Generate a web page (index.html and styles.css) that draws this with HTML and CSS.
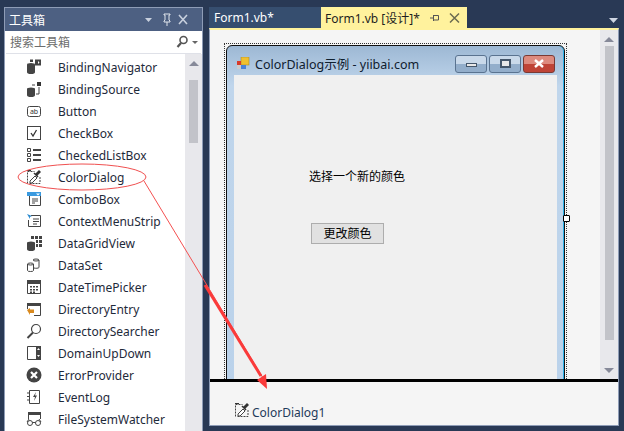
FILE: index.html
```html
<!DOCTYPE html>
<html lang="zh">
<head>
<meta charset="utf-8">
<title>ColorDialog</title>
<link rel="stylesheet" href="styles.css">
</head>
<body>
<div class="ide">
  <aside class="toolbox">
    <header class="tb-title">
      <span class="tb-name">工具箱</span>
      <svg class="tb-ctl" width="52" height="14" viewBox="0 0 52 14"><path d="M0 5h7l-3.500 4z" fill="#c8d0de"/><path d="M19 1h6v1h-1v5l1 1v1h-6V8l1-1V2h-1zM22 9v4" fill="none" stroke="#dfe4ec"/><path d="M34 2l8 9M42 2l-8 9" stroke="#c8d0de" stroke-width="1.600"/></svg>
    </header>
    <div class="tb-search">
      <span class="tb-hint">搜索工具箱</span>
      <svg width="24" height="14" viewBox="0 0 24 14"><circle cx="7.500" cy="5" r="3.500" fill="none" stroke="#555" stroke-width="1.600"/><path d="M5 8L1.500 12" stroke="#555" stroke-width="2.200"/><path d="M16 6h6l-3 3z" fill="#666"/></svg>
    </div>
    <div class="tb-body">
      <ul class="tb-list">
        <li class="tb-item"><svg class="ico" viewBox="0 0 16 16"><path d="M1 5.500a4 1.500 0 0 1 8 0V13a4 2 0 0 1-8 0z" fill="#444"/><path d="M4 3V.500h3V3M9 .500h6v6H9z" fill="#444"/><path d="M12 2v3l1.500-1.500z" fill="#fff"/></svg><span>BindingNavigator</span></li>
        <li class="tb-item"><svg class="ico" viewBox="0 0 16 16"><path d="M1 8a4 1.500 0 0 1 8 0v6a4 2 0 0 1-8 0z" fill="#444"/><path d="M11 1h4v4h-4z" fill="#333"/><path d="M13 6v7h-3M6 4h3" fill="none" stroke="#444"/></svg><span>BindingSource</span></li>
        <li class="tb-item"><svg class="ico" viewBox="0 0 16 16"><rect x="1.500" y="3.500" width="13" height="10" rx="2" fill="none" stroke="#444"/><text class="ico-t" x="8" y="11">ab</text></svg><span>Button</span></li>
        <li class="tb-item"><svg class="ico" viewBox="0 0 16 16"><rect x="1.500" y="1.500" width="13" height="13" fill="none" stroke="#444"/><path d="M5 8l2 3 3.500-6" fill="none" stroke="#333" stroke-width="1.300"/></svg><span>CheckBox</span></li>
        <li class="tb-item"><svg class="ico" viewBox="0 0 16 16"><path d="M1.500 1.500h3v3h-3zM1.500 6.500h3v3h-3zM1.500 11.500h3v3h-3z" fill="none" stroke="#444"/><path d="M7 3h8M7 8h8M7 13h8" stroke="#444" stroke-width="2"/></svg><span>CheckedListBox</span></li>
        <li class="tb-item"><svg class="ico" viewBox="0 0 16 16"><path d="M1.500 14.500v-12h7M14 8v6.500H3" fill="none" stroke="#444" stroke-dasharray="2 1"/><path d="M1 1h4v1H1z" fill="#333"/><path d="M4 12l5-5 2 2-5 5H4z" fill="#fff" stroke="#444"/><path d="M9 5l4-4 2 2-4 4z" fill="#333"/><path d="M8 4l4 4" stroke="#333" stroke-width="1.500"/></svg><span>ColorDialog</span></li>
        <li class="tb-item"><svg class="ico" viewBox="0 0 16 16"><path d="M1 1h14v4H1z" fill="#3a9ae0"/><path d="M10 2.500h4l-2 2z" fill="#fff"/><path d="M3.500 5v9.500h11V5" fill="none" stroke="#444"/><path d="M6 8h6M6 10h6M6 12h3" stroke="#444"/></svg><span>ComboBox</span></li>
        <li class="tb-item"><svg class="ico" viewBox="0 0 16 16"><path d="M5 2.500h9.500v11h-12V7" fill="none" stroke="#444"/><path d="M7 6h6M7 8.500h6M7 11h4" stroke="#444"/><path d="M1 1l5 2-2 1 0 2z" fill="#2a8ad0"/></svg><span>ContextMenuStrip</span></li>
        <li class="tb-item"><svg class="ico" viewBox="0 0 16 16"><path d="M1 8a4 1.500 0 0 1 8 0v6a4 2 0 0 1-8 0z" fill="#444"/><path d="M5 1h3v3H5zM9 1h3v3H9zM13 1h3v3h-3zM10 5h2v3h-2zM13 5h3v3h-3zM10 9h2v3h-2zM13 9h3v3h-3z" fill="#444"/></svg><span>DataGridView</span></li>
        <li class="tb-item"><svg class="ico" viewBox="0 0 16 16"><path d="M1.500 7a3 1 0 0 1 6 0v6.500a3 1 0 0 1-6 0zM1.500 7a3 1 0 0 0 6 0" fill="#fff" stroke="#444"/><path d="M7 3a3 1 0 0 1 6 0v7.500a3 1 0 0 1-5 .5" fill="none" stroke="#444"/><path d="M7 3a3 1 0 0 0 6 0" fill="none" stroke="#444"/></svg><span>DataSet</span></li>
        <li class="tb-item"><svg class="ico" viewBox="0 0 16 16"><path d="M1 1h14v4H1z" fill="#444"/><path d="M1.500 1.500h13v13h-13z" fill="none" stroke="#444"/><path d="M4 7h2v1.500H4zM7 7h2v1.500H7zM10 7h2v1.500h-2zM4 10h2v1.500H4zM7 10h2v1.500H7zM10 10h2v1.500h-2zM4 12.500h2V14H4zM7 12.500h2V14H7z" fill="#444"/></svg><span>DateTimePicker</span></li>
        <li class="tb-item"><svg class="ico" viewBox="0 0 16 16"><path d="M1 2h14v3H1z" fill="#444"/><path d="M14.500 5v9.500H8M1.500 5v3" fill="none" stroke="#444"/><path d="M1 9l3-2v1.500h4V12H4v2z" fill="#d98a1f"/></svg><span>DirectoryEntry</span></li>
        <li class="tb-item"><svg class="ico" viewBox="0 0 16 16"><circle cx="10" cy="6" r="4.500" fill="none" stroke="#444" stroke-width="1.200"/><path d="M7 9.500L1.500 15" stroke="#444" stroke-width="2"/></svg><span>DirectorySearcher</span></li>
        <li class="tb-item"><svg class="ico" viewBox="0 0 16 16"><path d="M1.500 1.500h13v13h-13z" fill="none" stroke="#444"/><path d="M10 1h5v14h-5z" fill="#444"/><path d="M12.500 3l1.500 2h-3zM11 10h3l-1.500 2z" fill="#fff"/></svg><span>DomainUpDown</span></li>
        <li class="tb-item"><svg class="ico" viewBox="0 0 16 16"><circle cx="8" cy="8" r="7.500" fill="#444"/><path d="M5 5l6 6M11 5l-6 6" stroke="#fff" stroke-width="2.200"/></svg><span>ErrorProvider</span></li>
        <li class="tb-item"><svg class="ico" viewBox="0 0 16 16"><path d="M3.500 1.500h10v13h-10z" fill="none" stroke="#444"/><path d="M2 3.500v1M2 7v1M2 10.500v1" stroke="#444" stroke-width="2"/><path d="M10 3L7 8h2l-1 4 3-5.500H9z" fill="#444"/></svg><span>EventLog</span></li>
        <li class="tb-item"><svg class="ico" viewBox="0 0 16 16"><path d="M2 1h13v3H2z" fill="#444"/><path d="M2.500 4v4M14.500 4v4" stroke="#444"/><circle cx="4" cy="12" r="2.500" fill="none" stroke="#444"/><circle cx="12" cy="12" r="2.500" fill="none" stroke="#444"/><path d="M6.500 11.500h3M1 11l2-3M15 11l-2-3" stroke="#444"/></svg><span>FileSystemWatcher</span></li>
      </ul>
      <div class="tb-scroll">
        <span class="arrow-up"></span>
        <span class="thumb"></span>
      </div>
    </div>
  </aside>
  <main class="doc">
    <nav class="tabs">
      <span class="tab">Form1.vb*</span>
      <span class="tab tab-active">Form1.vb [设计]*
        <svg width="30" height="12" viewBox="0 0 30 12"><path d="M0 6h3M3.500 3v6M3.500 3.500h5v4.500h-5" fill="none" stroke="#555"/><path d="M20 1.500l9 9M29 1.500l-9 9" stroke="#6b6b50" stroke-width="1.500"/></svg>
      </span>
      <svg class="tabs-menu" width="9" height="6" viewBox="0 0 9 6"><path d="M0 0h9L4.500 5z" fill="#cfd6e2"/></svg>
    </nav>
    <div class="designer">
      <div class="canvas">
        <div class="selection">
          <div class="form">
            <div class="form-title">
              <svg width="13" height="13" viewBox="0 0 13 13"><rect x="4" y="0" width="8" height="8" fill="#f0c030" stroke="#a08020" stroke-width=".5"/><rect x="0" y="4" width="4" height="4" fill="#d83a2a"/><rect x="4" y="8" width="5" height="4" fill="#4a82d8"/><rect x="0" y="8" width="4" height="4" fill="#ccc"/></svg>
              <span class="form-cap">ColorDialog示例 - yiibai.com</span>
              <span class="win-btns">
                <span class="wb"><i class="g-min"></i></span>
                <span class="wb"><i class="g-max"></i></span>
                <span class="wb wb-close"><svg width="12" height="9" viewBox="0 0 12 9"><path d="M2 1l8 7M10 1L2 8" stroke="#fff" stroke-width="2.400"/></svg></span>
              </span>
            </div>
            <div class="form-client">
              <p class="form-label">选择一个新的颜色</p>
              <span class="form-btn">更改颜色</span>
            </div>
          </div>
          <span class="grip"></span>
        </div>
        <div class="v-scroll">
          <span class="arrow-up"></span>
          <span class="v-thumb"></span>
          <span class="arrow-down"></span>
        </div>
      </div>
      <div class="tray">
        <svg class="tray-ico" viewBox="0 0 16 16"><path d="M1.500 14.500v-12h7M14 8v6.500H3" fill="none" stroke="#444" stroke-dasharray="2 1"/><path d="M1 1h4v1H1z" fill="#333"/><path d="M4 12l5-5 2 2-5 5H4z" fill="#fff" stroke="#444"/><path d="M9 5l4-4 2 2-4 4z" fill="#333"/><path d="M8 4l4 4" stroke="#333" stroke-width="1.500"/></svg>
        <span>ColorDialog1</span>
      </div>
    </div>
  </main>
</div>
<svg class="annot" width="624" height="431" viewBox="0 0 624 431">
  <ellipse cx="82" cy="177" rx="64" ry="13" fill="none" stroke="#f05050"/>
  <path d="M144 181L263 378" stroke="#f45050" stroke-width="1"/>
  <path d="M205 285L261 376" stroke="#fa3a3a" stroke-width="3"/>
  <path d="M267 389L257 380 266 374z" fill="#fa3a3a"/>
</svg>
</body>
</html>
```
FILE: styles.css
```css
* { box-sizing: border-box; }
html, body { margin: 0; padding: 0; }
body {
  width: 624px;
  height: 431px;
  overflow: hidden;
  background: #293955;
  font-family: "Noto Sans", "Noto Sans CJK SC", sans-serif;
  font-size: 12px;
  color: #1e2a3a;
  position: relative;
}
.ide {
  display: flex;
  height: 431px;
  padding: 7px 5px 5px 4px;
  gap: 6px;
}
.toolbox {
  width: 199px;
  height: 431px;
  flex: none;
  display: flex;
  flex-direction: column;
  border: 1px solid #8e9cb6;
  border-bottom: 0;
  background: #fff;
}
.tb-title {
  height: 23px;
  flex: none;
  background: #4d6082;
  color: #fff;
  display: flex;
  align-items: center;
  justify-content: space-between;
  padding: 0 5px 0 4px;
  font-size: 12px;
}
.tb-search {
  height: 23px;
  flex: none;
  margin: 0 1px;
  display: flex;
  align-items: center;
  justify-content: space-between;
  padding: 0 1px 0 4px;
  background: #fff;
  color: #6d6d6d;
  border-bottom: 1px solid #dfe1e8;
}
.tb-body { flex: 1; display: flex; min-height: 0; }
.tb-list {
  list-style: none;
  margin: 0;
  padding: 2px 0 0;
  flex: 1;
  min-width: 0;
}
.tb-item {
  height: 22px;
  display: flex;
  align-items: center;
  padding-left: 21px;
  gap: 16px;
  color: #1e2a3a;
  white-space: nowrap;
}
.ico { width: 16px; height: 16px; flex: none; }
.ico-t { font-size: 7px; text-anchor: middle; fill: #333; font-family: "Noto Sans", sans-serif; }
.tb-scroll {
  width: 17px;
  flex: none;
  background: #e8e8ec;
  display: flex;
  flex-direction: column;
  align-items: center;
  padding-top: 7px;
}
.arrow-up {
  width: 0;
  height: 0;
  border-left: 5px solid transparent;
  border-right: 5px solid transparent;
  border-bottom: 5px solid #868999;
  flex: none;
}
.arrow-down {
  width: 0;
  height: 0;
  border-left: 5px solid transparent;
  border-right: 5px solid transparent;
  border-top: 5px solid #868999;
  flex: none;
}
.thumb {
  width: 9px;
  height: 63px;
  margin-top: 14px;
  background: #c2c3c9;
}
.doc {
  flex: 1;
  min-width: 0;
  display: flex;
  flex-direction: column;
}
.tabs {
  height: 21px;
  flex: none;
  display: flex;
  align-items: stretch;
  position: relative;
}
.tab {
  width: 112px;
  background: #364e6f;
  color: #fff;
  padding: 2px 0 0 5px;
  font-size: 12px;
  white-space: nowrap;
}
.tab-active {
  width: 146px;
  background: #fff29d;
  color: #1e1e1e;
  display: flex;
  align-items: center;
  justify-content: space-between;
  padding: 0 7px 0 4px;
}
.tabs-menu { position: absolute; right: 1px; top: 11px; }
.designer {
  flex: 1;
  min-height: 0;
  display: flex;
  flex-direction: column;
  border: 1px solid #8e9cb6;
  border-top: 2px solid #fff29d;
  background: #f5f5f5;
}
.canvas {
  height: 352px;
  flex: none;
  display: flex;
  justify-content: space-between;
  overflow: hidden;
  padding: 13px 0 0 14px;
  border-bottom: 3px solid #000;
}
.selection {
  width: 343px;
  height: 400px;
  padding: 2px;
  outline: 1px dotted #333;
  outline-offset: -1px;
  position: relative;
}
.grip {
  position: absolute;
  right: -3px;
  top: 172px;
  width: 7px;
  height: 7px;
  background: #fff;
  border: 1px solid #000;
  border-radius: 1px;
}
.form {
  height: 420px;
  border: 1px solid #111;
  border-radius: 6px 6px 0 0;
  background: linear-gradient(#9db8d4, #c0d6ec 40px, #b9d1ea);
  padding: 0 7px;
  box-shadow: inset -1px 0 #2ab0e8;
}
.form-title {
  height: 29px;
  display: flex;
  align-items: center;
  padding: 6px 0 0 3px;
  gap: 5px;
}
.form-cap { flex: 1; color: #10202f; font-size: 12.500px; }
.win-btns { display: flex; gap: 2px; margin-right: 2px; }
.wb {
  width: 32px;
  height: 18px;
  border: 1px solid #5a7390;
  border-radius: 3px;
  background: linear-gradient(#c9d9ea 50%, #93aecb 50%);
  display: flex;
  align-items: center;
  justify-content: center;
}
.wb-close {
  border-color: #7a3a34;
  background: linear-gradient(#dd8a7e 50%, #bf4437 50%);
}
.g-min { width: 11px; height: 4px; background: #e8e8e8; border: 1px solid #44566a; margin-top: 3px; }
.g-max { width: 11px; height: 9px; background: #e8e8e8; border: 2px solid #44566a; }
.form-client {
  height: 380px;
  background: #f0f0f0;
  padding: 94px 0 0 75px;
  color: #000;
  font-size: 12px;
}
.form-label { margin: 0; line-height: 16px; }
.form-btn {
  display: block;
  width: 73px;
  height: 21px;
  margin: 38px 0 0 2px;
  border: 1px solid #adadad;
  background: #e1e1e1;
  text-align: center;
  line-height: 19px;
}
.v-scroll {
  width: 18px;
  flex: none;
  margin-top: -13px;
  background: #e8e8ec;
  display: flex;
  flex-direction: column;
  align-items: center;
  padding: 7px 0 6px;
}
.v-thumb {
  width: 9px;
  flex: 1;
  margin: 4px 0 28px;
  background: #c2c3c9;
}
.tray {
  flex: 1;
  display: flex;
  align-items: center;
  gap: 2px;
  padding: 18px 0 0 24px;
  color: #1e3a5a;
}
.tray-ico { width: 16px; height: 16px; flex: none; margin-top: -6px; }
.annot { position: absolute; left: 0; top: 0; pointer-events: none; }
```
